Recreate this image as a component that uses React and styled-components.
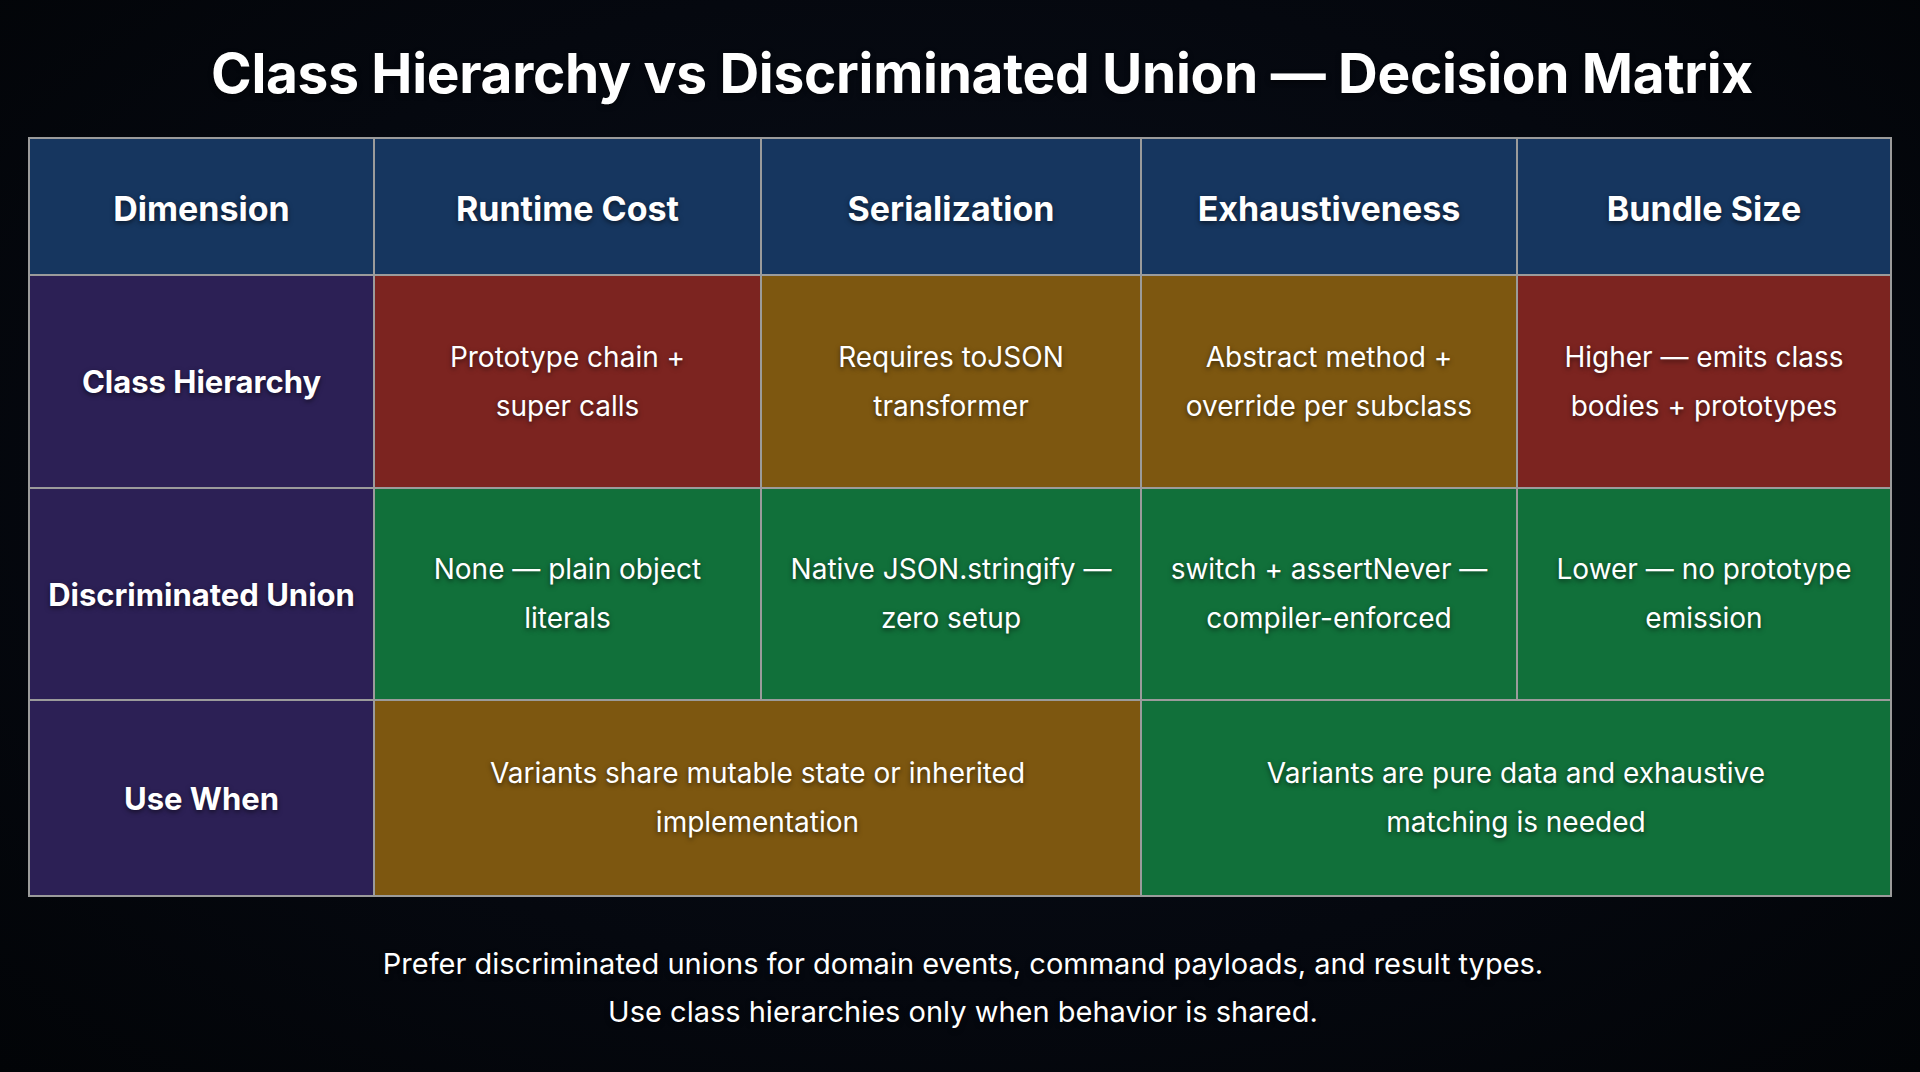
import styled, { createGlobalStyle } from "styled-components";

const GlobalStyle = createGlobalStyle`
  html, body {
    margin: 0;
    padding: 0;
    background: #04070d;
  }
  * {
    box-sizing: border-box;
  }
`;

const tones = {
  head: "#16365f",
  label: "#2c2055",
  bad: "#7c2420",
  mid: "#7d5710",
  good: "#11703a",
};

const Page = styled.main`
  min-height: 1072px;
  padding-top: 41px;
  background: radial-gradient(ellipse at 50% 45%, #0a0f1a 0%, #05080f 60%, #020407 100%);
  font-family: Inter, "Noto Sans", sans-serif;
  color: #ffffff;
  text-shadow: 0 2px 5px rgba(0, 0, 0, 0.55);
`;

const Title = styled.h1`
  margin: 0 0 32px;
  padding-left: 44px;
  height: 64px;
  line-height: 64px;
  font-size: 55px;
  font-weight: 700;
  text-align: center;
  letter-spacing: -0.3px;
`;

const Matrix = styled.section`
  display: grid;
  grid-template-columns: 343px 385px 378px 374px 372px;
  grid-template-rows: 135px 211px 210px 194px;
  gap: 2px;
  padding: 2px;
  width: 1864px;
  margin: 0 auto;
  background: #9b9b9b;
`;

const Cell = styled.div`
  display: flex;
  align-items: center;
  justify-content: center;
  padding: 0 12px;
  text-align: center;
  background: ${(p) => tones[p.$tone]};
  grid-column: span ${(p) => p.$span || 1};
  font-size: 28px;
  font-weight: 400;
  line-height: 49px;
`;

const HeadCell = styled(Cell)`
  padding-top: 4px;
  font-size: 34px;
  font-weight: 700;
  white-space: nowrap;
`;

const LabelCell = styled(Cell)`
  font-size: 31px;
  font-weight: 700;
  white-space: nowrap;
`;

const Note = styled.p`
  margin: 43px 0 0;
  padding-left: 6px;
  font-size: 29px;
  line-height: 48px;
  text-align: center;
`;

const columns = ["Dimension", "Runtime Cost", "Serialization", "Exhaustiveness", "Bundle Size"];

const rows = [
  {
    label: "Class Hierarchy",
    cells: [
      { tone: "bad", text: ["Prototype chain +", "super calls"] },
      { tone: "mid", text: ["Requires toJSON", "transformer"] },
      { tone: "mid", text: ["Abstract method +", "override per subclass"] },
      { tone: "bad", text: ["Higher — emits class", "bodies + prototypes"] },
    ],
  },
  {
    label: "Discriminated Union",
    cells: [
      { tone: "good", text: ["None — plain object", "literals"] },
      { tone: "good", text: ["Native JSON.stringify —", "zero setup"] },
      { tone: "good", text: ["switch + assertNever —", "compiler-enforced"] },
      { tone: "good", text: ["Lower — no prototype", "emission"] },
    ],
  },
  {
    label: "Use When",
    cells: [
      { tone: "mid", span: 2, text: ["Variants share mutable state or inherited", "implementation"] },
      { tone: "good", span: 2, text: ["Variants are pure data and exhaustive", "matching is needed"] },
    ],
  },
];

const Lines = ({ text }) => (
  <span>
    {text.map((line, i) => (
      <span key={i}>
        {i > 0 && <br />}
        {line}
      </span>
    ))}
  </span>
);

const App = () => (
  <Page>
    <GlobalStyle />
    <Title>Class Hierarchy vs Discriminated Union — Decision Matrix</Title>
    <Matrix>
      {columns.map((c) => (
        <HeadCell key={c} $tone="head">
          {c}
        </HeadCell>
      ))}
      {rows.map((row) => [
        <LabelCell key={row.label} $tone="label">
          {row.label}
        </LabelCell>,
        ...row.cells.map((cell, i) => (
          <Cell key={row.label + i} $tone={cell.tone} $span={cell.span}>
            <Lines text={cell.text} />
          </Cell>
        )),
      ])}
    </Matrix>
    <Note>
      Prefer discriminated unions for domain events, command payloads, and result types.
      <br />
      Use class hierarchies only when behavior is shared.
    </Note>
  </Page>
);

export default App;
